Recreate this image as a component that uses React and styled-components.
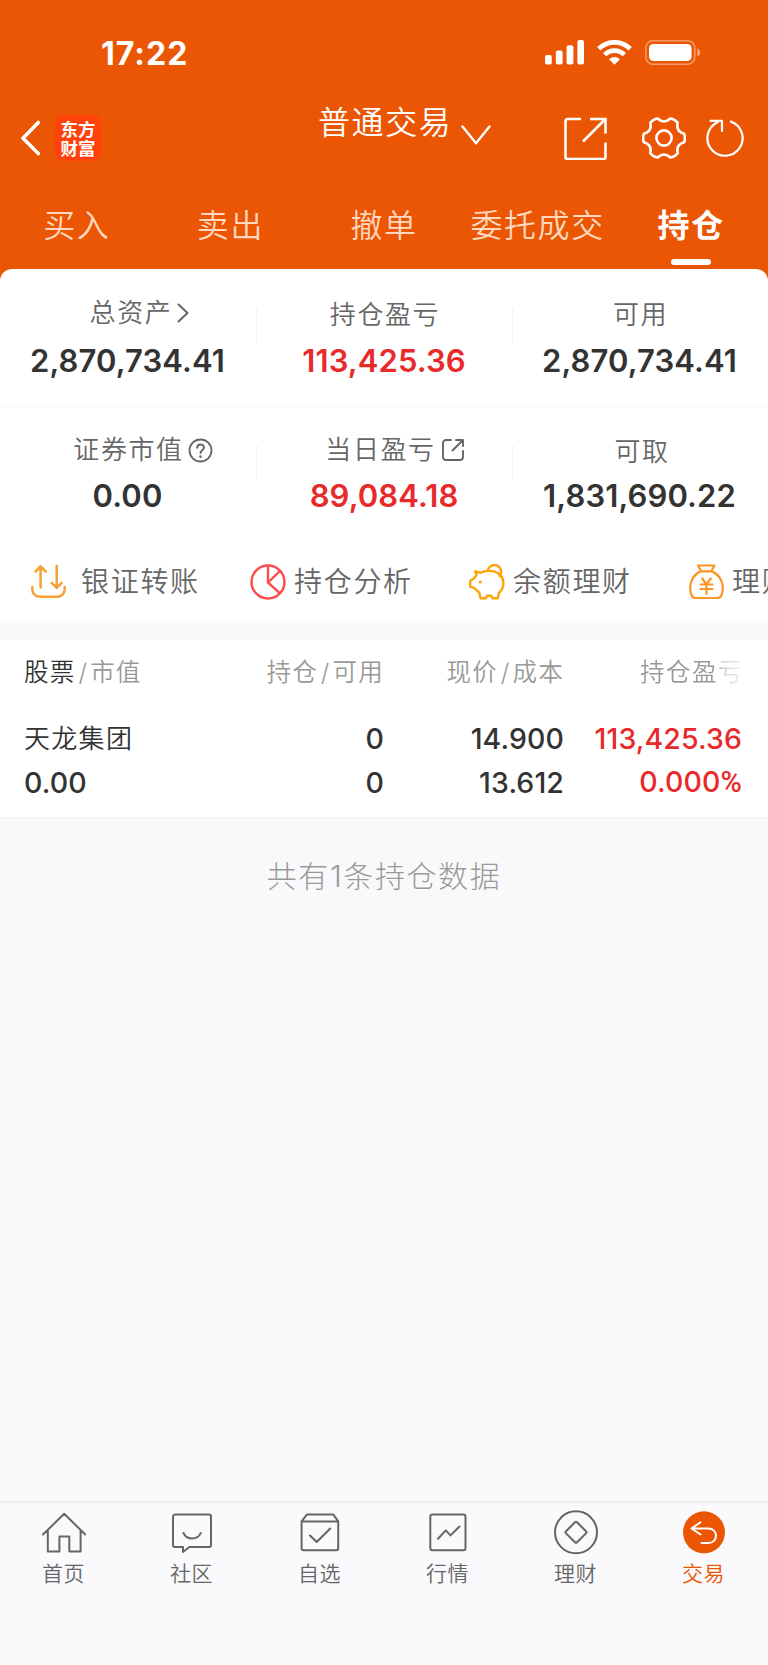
import styled, { createGlobalStyle } from 'styled-components';

const GlobalStyle = createGlobalStyle`
	* {
		box-sizing: border-box;
	}
	body {
		margin: 0;
		background-color: #f9f9fc;
		font-family: Inter, 'Noto Sans CJK SC', sans-serif;
		color: #333;
	}
`;

const Container = styled.div`
	width: 768px;
	height: 1665px;
	display: flex;
	flex-direction: column;
	overflow: hidden;
	white-space: nowrap;
`;
const Header = styled.header`
	height: 281px;
	margin-bottom: -12px;
	background-color: #eb5604;
	color: white;
`;
const StatusBar = styled.div`
	height: 98px;
	padding: 6px 67px 0 101px;
	display: flex;
	align-items: center;
	justify-content: space-between;
`;
const Time = styled.div`
	font-size: 32px;
	font-weight: 750;
	letter-spacing: 1px;
	padding-top: 2px;
`;
const StatusIcons = styled.div`
	display: flex;
	gap: 13px;
`;
const NavBar = styled.div`
	height: 80px;
	padding: 0 22px 0 20px;
	display: grid;
	grid-template-columns: 298px 1fr auto;
	align-items: center;
`;
const NavLeft = styled.div`
	display: flex;
	align-items: center;
	gap: 14px;
`;
const Logo = styled.div`
	width: 46px;
	height: 46px;
	border-radius: 9px;
	background-color: #ff420b;
	display: flex;
	flex-direction: column;
	align-items: center;
	justify-content: center;
	font-family: 'Noto Sans CJK SC', sans-serif;
	font-size: 17.5px;
	font-weight: 700;
	line-height: 19px;
`;
const Title = styled.div`
	display: flex;
	align-items: center;
	gap: 9px;
	font-size: 32px;
	font-weight: 350;
	letter-spacing: 1.6px;
	line-height: 48px;
	padding-bottom: 31px;

	svg {
		margin-top: 24px;
	}
`;
const NavIcons = styled.div`
	display: flex;
	align-items: center;
	padding-bottom: 1px;
`;
const ShareIcon = styled.svg`
	margin-right: 35px;
`;
const GearIcon = styled.svg`
	margin-right: 20px;
`;
const Tabs = styled.nav`
	height: 91px;
	display: grid;
	grid-template-columns: repeat(5, 1fr);
`;
const Tab = styled.div`
	display: flex;
	flex-direction: column;
	align-items: center;
	padding-top: 24px;
	font-size: 32px;
	line-height: 48px;
	letter-spacing: 1.6px;
	font-weight: ${(props) => (props.$active ? 700 : 350)};
	color: ${(props) => (props.$active ? 'white' : '#ffd8bf')};

	&::after {
		content: '';
		width: 40px;
		height: 6px;
		margin-top: 9px;
		border-radius: 3px;
		background-color: ${(props) => (props.$active ? 'white' : 'transparent')};
	}
`;
const Card = styled.section`
	height: 352px;
	flex: none;
	border-radius: 12px 12px 0 0;
	background-color: white;
`;
const Summary = styled.div`
	height: ${(props) => props.$height}px;
	padding-top: ${(props) => props.$top}px;
	display: grid;
	grid-template-columns: 257px 256px 255px;
	border-bottom: ${(props) => (props.$line ? '1px solid #f5f5f6' : 'none')};
`;
const Stat = styled.div`
	display: flex;
	flex-direction: column;
	align-items: center;
	background: linear-gradient(#f3f3f4, #f3f3f4) 100% 15px / 1px 34px no-repeat;

	&:last-child {
		background: none;
	}
`;
const StatLabel = styled.div`
	height: 40px;
	padding-top: ${(props) => (props.$low ? 4 : 0)}px;
	padding-left: ${(props) => props.$indent || 0}px;
	display: flex;
	align-items: center;
	gap: ${(props) => props.$gap || 5}px;
	font-size: 26px;
	font-weight: 350;
	letter-spacing: 1.6px;
	line-height: 38px;
	color: #666;
`;
const StatValue = styled.div`
	height: 40px;
	margin-top: ${(props) => props.$gap}px;
	padding-right: 2px;
	font-size: 31px;
	font-weight: 600;
	letter-spacing: 0.1px;
	line-height: 40px;
	color: ${(props) => (props.$up ? '#e82a2a' : '#333')};
`;
const Actions = styled.div`
	display: flex;
	padding: 0 0 0 31px;
	height: 78px;
	align-items: center;
	overflow: hidden;
`;
const Action = styled.div`
	flex: none;
	width: ${(props) => props.$width}px;
	display: flex;
	align-items: center;
	gap: ${(props) => props.$gap || 8}px;
	font-size: 28px;
	font-weight: 350;
	letter-spacing: 1.7px;
	line-height: 40px;
	color: #666;

	svg {
		flex: none;
	}
`;
const Holdings = styled.section`
	height: 178px;
	flex: none;
	margin-top: 19px;
	padding: 0 27px 0 24px;
	background-color: white;
	border-bottom: 1px solid #f2f2f4;
`;
const Row = styled.div`
	display: grid;
	grid-template-columns: 180px 180px 180px 1fr;
	height: ${(props) => props.$height}px;
	align-items: center;
`;
const HeadRow = styled(Row)`
	margin-bottom: 11px;
`;
const HeadCell = styled.div`
	text-align: ${(props) => (props.$left ? 'left' : 'right')};
	font-size: 24.5px;
	font-weight: 350;
	letter-spacing: 1.2px;
	line-height: 36px;
	padding-bottom: 2px;
	color: #999;
`;
const Strong = styled.span`
	color: #333;
`;
const Slash = styled.span`
	margin: 0 2px 0 3px;
	font-weight: 300;
`;
const Fading = styled(HeadCell)`
	margin-right: -3px;
	letter-spacing: 1.5px;
	mask-image: linear-gradient(to right, black 86%, rgba(0, 0, 0, 0.45) 88%, transparent 103%);
`;
const StockName = styled.div`
	font-size: 26px;
	font-weight: 350;
	letter-spacing: 1.3px;
	line-height: 43px;
`;
const Cell = styled.div`
	text-align: ${(props) => (props.$left ? 'left' : 'right')};
	font-size: 28.5px;
	font-weight: 550;
	letter-spacing: 0.1px;
	line-height: 43px;
	margin-right: ${(props) => (props.$up ? -1 : 0)}px;
	color: ${(props) => (props.$up ? '#e82a2a' : '#333')};
`;
const Percent = styled.span`
	font-family: Roboto, sans-serif;
	font-weight: 500;
	font-size: 29px;
`;
const Total = styled.div`
	flex: 1;
	padding-top: 36px;
	text-align: center;
	font-size: 30px;
	font-weight: 300;
	letter-spacing: 1.6px;
	line-height: 44px;
	color: #999;
`;
const BottomNav = styled.nav`
	height: 164px;
	flex: none;
	display: grid;
	grid-template-columns: repeat(6, 1fr);
	border-top: 2px solid #ededf0;
	background-color: #fafafd;
`;
const NavItem = styled.div`
	display: flex;
	flex-direction: column;
	align-items: center;
	padding: 6px 1px 0 0;
	font-size: 21px;
	font-weight: 350;
	line-height: 30px;
	letter-spacing: 0.5px;
	color: ${(props) => (props.$active ? '#eb5604' : '#666')};

	svg {
		margin-bottom: 4px;
	}
`;

const line = {
	fill: 'none',
	stroke: 'currentColor',
	strokeLinecap: 'round',
	strokeLinejoin: 'round',
};

const Signal = () => (
	<svg width="39" height="25" viewBox="0 0 39 25" fill="white">
		<rect x="0" y="15" width="6.8" height="9.5" rx="2" />
		<rect x="10.8" y="10.5" width="6.8" height="14" rx="2" />
		<rect x="21.6" y="5.3" width="6.8" height="19.2" rx="2" />
		<rect x="32.4" y="0" width="6.6" height="24.5" rx="2" />
	</svg>
);

const Wifi = () => (
	<svg width="35" height="25" viewBox="0 0 35 25" fill="none" stroke="white">
		<path d="M1.8 8.8a22.4 22.4 0 0 1 31.4 0" strokeWidth="4.8" />
		<path d="M7.6 14.6a14.2 14.2 0 0 1 19.8 0" strokeWidth="4.6" />
		<path d="M12 19.2Q17.5 14.6 23 19.2L17.5 24.7Z" fill="white" stroke="none" />
	</svg>
);

const Battery = () => (
	<svg width="56" height="25" viewBox="0 0 56 25">
		<rect x="0.8" y="0.8" width="49" height="23.4" rx="7.2" fill="none" stroke="white" strokeOpacity="0.4" strokeWidth="1.6" />
		<rect x="4" y="4" width="42.6" height="17" rx="4.6" fill="white" />
		<path d="M52.2 8.6q3 1 3 3.9t-3 3.9z" fill="white" fillOpacity="0.45" />
	</svg>
);

const actions = [
	{
		label: '银证转账',
		width: 219,
		gap: 15,
		icon: (
			<svg width="35" height="36" viewBox="0 0 35 36" {...line} stroke="#f5a033" strokeWidth="2.5">
				<path d="M1.3 23v2.2a7.6 7.6 0 0 0 7.6 7.6h17.2a7.6 7.6 0 0 0 7.6-7.6V23" />
				<path d="M9.6 23.5V2.7M4.5 7.5l5.1-5.2 5.1 5.2M25.7 2.1v21.4M20.7 18.8l5 5 5-5" />
			</svg>
		),
	},
	{
		label: '持仓分析',
		width: 219,
		icon: (
			<svg width="36" height="36" viewBox="0 0 36 36" {...line} stroke="#fb4b4f" strokeWidth="2.4">
				<circle cx="18" cy="18" r="16.5" />
				<path d="M18 2v16.5L29.9 7M18 18.5l11.5 10.3" />
			</svg>
		),
	},
	{
		label: '余额理财',
		width: 220,
		icon: (
			<svg width="36" height="36" viewBox="0 0 36 36" {...line} stroke="#fda409" strokeWidth="2.4">
				<path d="M6.2 7.4l5.3 1.4c3-1.6 6-2.2 9.5-1.9 8 .2 13.4 5.300 13.4 12.3 0 3.8-1.4 6.9-4.2 9.4l-1.500 5.700h-5l-1.500-2.500h-4l-1.500 2.500h-4.900l-1.700-5.900-4.700-4.300-4.200-1.500V16.700l3.900-2.500 2.400-3.300z" />
				<path d="M18.8 7a6.7 6.7 0 1 1 11.8 5" />
				<circle cx="11.2" cy="18" r="1.6" fill="#fda409" stroke="none" />
			</svg>
		),
	},
	{
		label: '理财',
		width: 130,
		icon: (
			<svg width="35" height="36" viewBox="0 0 35 36" {...line} stroke="#fa9526" strokeWidth="2.2">
				<path d="M9 1.500h16.500l-3.200 5.800H12.200zM12.200 7.300C5.500 9.500 1.400 16 1.200 23.800c0 2.700.3 5.200 1.200 7.200.8 2 2.100 3 4.200 3h21.800c2.100 0 3.400-1 4.200-3 .9-2 1.200-4.500 1.200-7.200-.2-7.800-4.800-14.300-11.500-16.500" />
				<path d="M13.300 14.500l4.200 6 4.200-6M11.500 20.500h12M11.500 25h12M17.500 20.500v9.500" />
			</svg>
		),
	},
];

const navItems = [
	{
		label: '首页',
		icon: (
			<svg width="46" height="46" viewBox="0 0 46 46" {...line} strokeWidth="2">
				<path d="M2 25.500L23.200 4.800 44.200 25.500M6.800 21.500v21h11.600V27.400h9.900v15.100h11.300v-21" />
			</svg>
		),
	},
	{
		label: '社区',
		icon: (
			<svg width="46" height="46" viewBox="0 0 46 46" {...line} strokeWidth="2">
				<path d="M6 5.500h34a2 2 0 0 1 2 2v28.500a2 2 0 0 1-2 2H20.500L14 43v-5H6a2 2 0 0 1-2-2V7.500a2 2 0 0 1 2-2zM14.500 24c3 7.300 14.400 7.300 17.200 0" />
			</svg>
		),
	},
	{
		label: '自选',
		icon: (
			<svg width="46" height="46" viewBox="0 0 46 46" {...line} strokeWidth="2">
				<path d="M4.600 12.300L10 5.400h26.200l5 6.900v27a2 2 0 0 1-2 2H6.600a2 2 0 0 1-2-2zM4.600 12.600h36.600M13 26.500l6.700 6.500 13.500-13.500" />
			</svg>
		),
	},
	{
		label: '行情',
		icon: (
			<svg width="46" height="46" viewBox="0 0 46 46" {...line} strokeWidth="2">
				<rect x="5.3" y="5.6" width="35.2" height="35.6" rx="2" />
				<path d="M13 29.800l7.800-8.400 4.700 5L34.500 17.500" />
			</svg>
		),
	},
	{
		label: '理财',
		icon: (
			<svg width="46" height="46" viewBox="0 0 46 46" {...line} strokeWidth="2">
				<circle cx="23" cy="23.3" r="21" />
				<rect x="15.2" y="15.5" width="15.6" height="15.6" rx="1.5" transform="rotate(45 23 23.3)" />
			</svg>
		),
	},
	{
		label: '交易',
		active: true,
		icon: (
			<svg width="46" height="46" viewBox="0 0 46 46" {...line}>
				<circle cx="23" cy="23.3" r="21" fill="#eb5604" stroke="none" />
				<path d="M19.500 13.300l-9 6.200 9 6M11 19.500h16.500c4.500 0 7.500 3.200 7.500 7.200s-3 7.300-7.500 7.300h-7" stroke="white" strokeWidth="2" />
			</svg>
		),
	},
];

const tabs = ['买入', '卖出', '撤单', '委托成交', '持仓'];

const App = () => {
	return (
		<Container>
			<GlobalStyle />
			<Header>
				<StatusBar>
					<Time>17:22</Time>
					<StatusIcons>
						<Signal />
						<Wifi />
						<Battery />
					</StatusIcons>
				</StatusBar>
				<NavBar>
					<NavLeft>
						<svg width="21" height="36" viewBox="0 0 21 36" {...line} strokeWidth="3.6">
							<path d="M18.3 2.5L3 18.2l15.3 15.3" />
						</svg>
						<Logo>
							<span>东方</span>
							<span>财富</span>
						</Logo>
					</NavLeft>
					<Title>
						普通交易
						<svg width="30" height="20" viewBox="0 0 30 20" {...line} strokeWidth="2.4">
							<path d="M1.5 1.5L15 18.3 28.5 1.5" />
						</svg>
					</Title>
					<NavIcons>
						<ShareIcon width="44" height="44" viewBox="0 0 44 44" {...line} strokeWidth="2.6">
							<path d="M18 3H4.500a2 2 0 0 0-2 2v36a2 2 0 0 0 2 2h36a2 2 0 0 0 2-2V26.500M27 3h15.500v14.500M42.500 3L20 25.500" strokeLinecap="butt" strokeLinejoin="miter" />
						</ShareIcon>
						<GearIcon width="44" height="44" viewBox="0 0 44 44" {...line} strokeWidth="2.6">
							<path d="M28.3 2.5Q32.900 3.100 35.700 6.800Q33.700 15.200 42.100 17.700Q43.800 22 42.100 26.300Q33.700 28.800 35.700 37.200Q32.900 40.900 28.300 41.500Q22 35.500 15.700 41.500Q11.100 40.900 8.300 37.200Q10.300 28.800 1.900 26.300Q.2 22 1.900 17.700Q10.300 15.200 8.300 6.800Q11.100 3.100 15.700 2.500Q22 8.500 28.300 2.500Z" />
							<circle cx="22" cy="22" r="7.6" />
						</GearIcon>
						<svg width="40" height="40" viewBox="0 0 40 40" {...line} strokeWidth="2.2">
							<path d="M25 3.600a17.600 17.600 0 1 1-13.400.6M4.500 2.800H16V13" />
						</svg>
					</NavIcons>
				</NavBar>
				<Tabs>
					{tabs.map((tab) => (
						<Tab key={tab} $active={tab === '持仓'}>
							{tab}
						</Tab>
					))}
				</Tabs>
			</Header>
			<Card>
				<Summary $height={138} $top={24} $line>
					<Stat>
						<StatLabel $gap={5} $indent={22}>
							总资产
							<svg width="12" height="20" viewBox="0 0 12 20" {...line} strokeWidth="2">
								<path d="M1.5 1.5l9 8.5-9 8.5" />
							</svg>
						</StatLabel>
						<StatValue $gap={8}>2,870,734.41</StatValue>
					</Stat>
					<Stat>
						<StatLabel $low>持仓盈亏</StatLabel>
						<StatValue $gap={8} $up>
							113,425.36
						</StatValue>
					</Stat>
					<Stat>
						<StatLabel $low>可用</StatLabel>
						<StatValue $gap={8}>2,870,734.41</StatValue>
					</Stat>
				</Summary>
				<Summary $height={136} $top={23}>
					<Stat>
						<StatLabel $gap={4} $indent={29}>
							证券市值
							<svg width="25" height="25" viewBox="0 0 25 25" {...line} strokeWidth="1.8">
								<circle cx="12.5" cy="12.5" r="11" />
								<path d="M9.2 9.8c.1-4.4 6.8-4.3 6.8-.3 0 2.7-3.5 2.7-3.5 5.5" strokeWidth="2" />
								<circle cx="12.5" cy="18.6" r="1.3" fill="currentColor" stroke="none" />
							</svg>
						</StatLabel>
						<StatValue $gap={6}>0.00</StatValue>
					</Stat>
					<Stat>
						<StatLabel $indent={20}>
							当日盈亏
							<svg width="24" height="24" viewBox="0 0 24 24" {...line} strokeWidth="1.9">
								<path d="M10 2H5a3 3 0 0 0-3 3v14a3 3 0 0 0 3 3h14a3 3 0 0 0 3-3v-6M15 2h7v6M21.5 2.5l-10 10" />
							</svg>
						</StatLabel>
						<StatValue $gap={6} $up>
							89,084.18
						</StatValue>
					</Stat>
					<Stat>
						<StatLabel $low $indent={3}>
							可取
						</StatLabel>
						<StatValue $gap={6}>1,831,690.22</StatValue>
					</Stat>
				</Summary>
				<Actions>
					{actions.map((item) => (
						<Action key={item.label} $width={item.width} $gap={item.gap}>
							{item.icon}
							{item.label}
						</Action>
					))}
				</Actions>
			</Card>
			<Holdings>
				<HeadRow $height={66}>
					<HeadCell $left>
						<Strong>股票</Strong>
						<Slash>/</Slash>市值
					</HeadCell>
					<HeadCell>
						持仓<Slash>/</Slash>可用
					</HeadCell>
					<HeadCell>
						现价<Slash>/</Slash>成本
					</HeadCell>
					<Fading>持仓盈亏</Fading>
				</HeadRow>
				<Row $height={43}>
					<StockName>天龙集团</StockName>
					<Cell>0</Cell>
					<Cell>14.900</Cell>
					<Cell $up>113,425.36</Cell>
				</Row>
				<Row $height={43}>
					<Cell $left>0.00</Cell>
					<Cell>0</Cell>
					<Cell>13.612</Cell>
					<Cell $up>
						0.000<Percent>%</Percent>
					</Cell>
				</Row>
			</Holdings>
			<Total>共有1条持仓数据</Total>
			<BottomNav>
				{navItems.map((item) => (
					<NavItem key={item.label} $active={item.active}>
						{item.icon}
						{item.label}
					</NavItem>
				))}
			</BottomNav>
		</Container>
	);
};

export default App;
